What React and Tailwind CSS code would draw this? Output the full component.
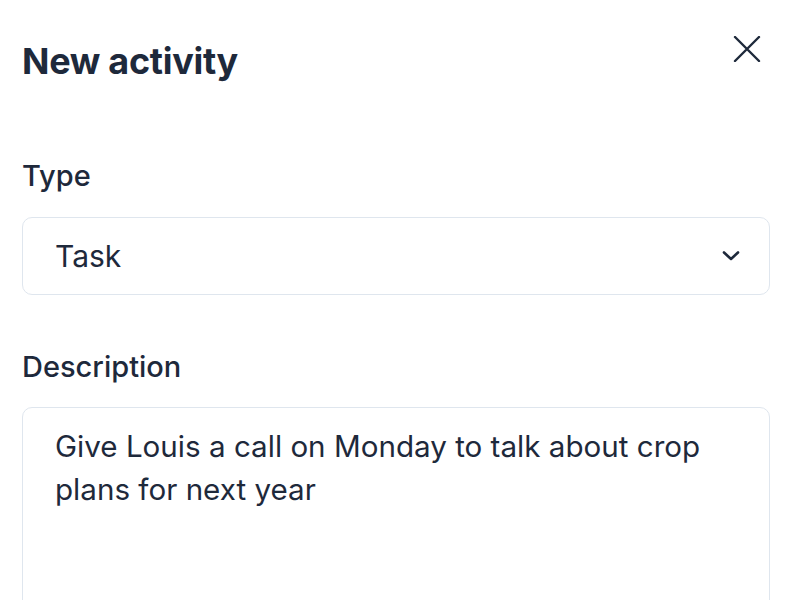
import React from "react";

export default function App() {
  return (
    <div className="w-[800px] h-[600px] overflow-hidden bg-white text-[#1f2937] font-['Inter',sans-serif]">
      <div className="pl-[22px] pr-[30px] pt-[36px]">
        <div className="flex items-start justify-between">
          <h1 className="text-[36px] leading-[50px] font-bold text-[#1e293b] tracking-[-0.3px]">New activity</h1>
          <svg width="28" height="26" viewBox="0 0 28 26" className="mt-[0px] mr-[9px]" fill="none" stroke="#1e293b" strokeWidth="2.4" strokeLinecap="round">
            <path d="M2 1 L26 25 M26 1 L2 25" />
          </svg>
        </div>
        <div className="mt-[72px] text-[29px] leading-[36px] font-medium text-[#1e293b]">Type</div>
        <div className="mt-[23px] h-[78px] border border-[#dfe6ee] rounded-[10px] flex items-center justify-between pl-[32px] pr-[28px]">
          <span className="text-[30px] text-[#1e293b]">Task</span>
          <svg width="20" height="14" viewBox="0 0 20 14" fill="none" stroke="#1e293b" strokeWidth="2.6" strokeLinecap="round" strokeLinejoin="round">
            <path d="M3 3.5 L10 10 L17 3.5" />
          </svg>
        </div>
        <div className="mt-[54px] text-[29px] leading-[36px] font-medium text-[#1e293b]">Description</div>
        <div className="mt-[22px] h-[260px] border border-[#dfe6ee] rounded-[10px] pl-[32px] pr-[28px] pt-[17px]">
          <p className="text-[29.6px] leading-[43px] text-[#1e293b]">Give Louis a call on Monday to talk about crop plans for next year</p>
        </div>
      </div>
    </div>
  );
}
